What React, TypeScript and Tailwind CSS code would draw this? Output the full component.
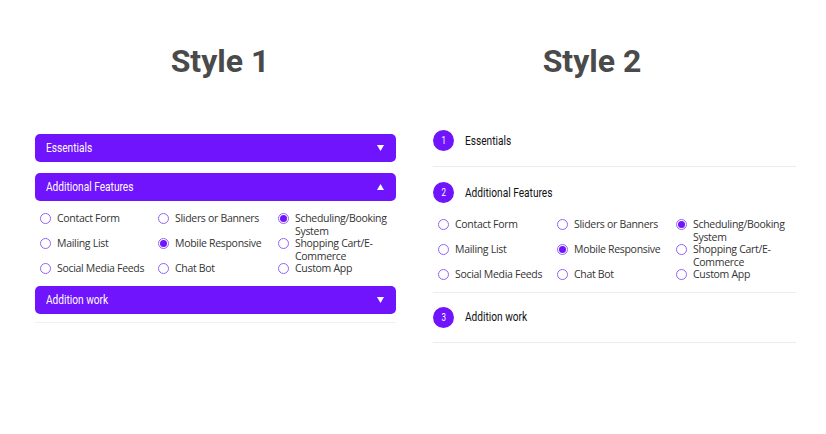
import React from "react";

const PURPLE = "bg-[#6f14fd]";

const cond = { fontFamily: "Roboto, sans-serif" };

type Opt = { label: string; checked?: boolean };
const options: Opt[] = [
  { label: "Contact Form" },
  { label: "Sliders or Banners" },
  { label: "Scheduling/Booking System", checked: true },
  { label: "Mailing List" },
  { label: "Mobile Responsive", checked: true },
  { label: "Shopping Cart/E-Commerce" },
  { label: "Social Media Feeds" },
  { label: "Chat Bot" },
  { label: "Custom App" },
];

function Radio({ checked }: { checked?: boolean }) {
  return (
    <span className="mt-[1px] flex h-[11px] w-[11px] shrink-0 items-center justify-center rounded-full border border-[#9462fb] bg-white">
      {checked && <span className="h-[7px] w-[7px] rounded-full bg-[#6f14fd]" />}
    </span>
  );
}

function Options({ cols }: { cols: string }) {
  return (
    <div className={`grid ${cols}`} style={{ fontFamily: '"Open Sans", sans-serif' }}>
      {options.map((o) => (
        <div key={o.label} className="flex items-start gap-[6px] text-[10.5px] leading-[12.5px] tracking-[-0.3px] text-[#333]">
          <Radio checked={o.checked} />
          <span>{o.label}</span>
        </div>
      ))}
    </div>
  );
}

function Arrow({ up }: { up?: boolean }) {
  return (
    <svg width="7" height="6" viewBox="0 0 7 6" className="block">
      {up ? <polygon points="3.5,0 7,6 0,6" fill="#fff" /> : <polygon points="0,0 7,0 3.5,6" fill="#fff" />}
    </svg>
  );
}

function Narrow({ children }: { children: React.ReactNode }) {
  return <span className="inline-block origin-left scale-x-[0.78] whitespace-nowrap">{children}</span>;
}

function Bar({ title, up }: { title: string; up?: boolean }) {
  return (
    <div className={`flex h-[28px] items-center justify-between rounded-[5px] ${PURPLE} pl-[11px] pr-[12px] text-[13px] text-white`} style={cond}>
      <Narrow>{title}</Narrow>
      <Arrow up={up} />
    </div>
  );
}

function Num({ n }: { n: number }) {
  return (
    <span className="flex h-[21px] w-[21px] shrink-0 items-center justify-center rounded-full bg-[#6f14fd] text-[10px] text-white" style={cond}>
      <span className="inline-block scale-x-[0.8]">{n}</span>
    </span>
  );
}

function Step({ n, title }: { n: number; title: string }) {
  return (
    <div className="flex items-center gap-[11px] text-[13px] text-[#111]" style={cond}>
      <Num n={n} />
      <Narrow>{title}</Narrow>
    </div>
  );
}

export default function App() {
  return (
    <div className="h-[434px] w-[826px] overflow-hidden bg-white">
      <div className="ml-[34px] grid w-[744px] grid-cols-2 pt-[41px]" style={{ fontFamily: "Roboto, sans-serif" }}>
        <h1 className="text-center text-[32px] font-bold leading-[40px] text-[#4a4a4a]">Style 1</h1>
        <h1 className="text-center text-[32px] font-bold leading-[40px] text-[#4a4a4a]">Style 2</h1>
      </div>
      <div className="flex items-start">
        <div className="ml-[35px] mt-[53px] w-[361px]">
          <Bar title="Essentials" />
          <div className="mt-[11px]">
            <Bar title="Additional Features" up />
          </div>
          <div className="pb-[11px] pl-[5px] pt-[11px]">
            <Options cols="grid-cols-[118px_120px_1fr]" />
          </div>
          <Bar title="Addition work" />
          <div className="mt-[8px] h-px bg-[#f0f0f0]" />
        </div>
        <div className="ml-[37px] mt-[34px] w-[363px]">
          <div className="border-b border-[#ececec] py-[15px]">
            <Step n={1} title="Essentials" />
          </div>
          <div className="border-b border-[#ececec] pb-[11px] pt-[15px]">
            <Step n={2} title="Additional Features" />
            <div className="pl-[5px] pt-[15px]">
              <Options cols="grid-cols-[119px_119px_1fr]" />
            </div>
          </div>
          <div className="border-b border-[#ececec] pb-[14px] pt-[14px]">
            <Step n={3} title="Addition work" />
          </div>
        </div>
      </div>
    </div>
  );
}
